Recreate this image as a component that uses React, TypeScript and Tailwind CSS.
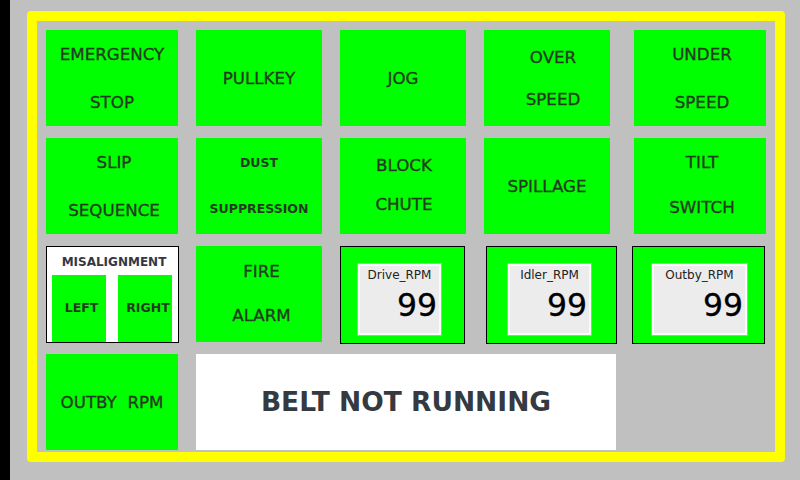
import React from 'react';

const font = { fontFamily: '"DejaVu Sans", Verdana, sans-serif' };

interface TileProps {
  lines: string[];
  spacing?: number;
  size?: string;
  className?: string;
}

// green push-button tile, lines spread vertically by `spacing` gap
const Tile: React.FC<TileProps> = ({
  lines,
  spacing = 28,
  size = 'text-[16.7px] [-webkit-text-stroke:0.35px_#233b23]',
  className = '',
}) => (
  <div
    className={`w-[126px] h-[96px] bg-[#00ff00] flex flex-col items-center justify-center text-[#233b23] ${size} ${className}`}
    style={{ ...font, rowGap: lines.length > 1 ? spacing : 0 }}
  >
    {lines.map((l) => (
      <span key={l} className="leading-[20px] whitespace-pre">
        {l}
      </span>
    ))}
  </div>
);

interface RpmProps {
  label: string;
  className: string;
  panel: string;
}

const RpmBox: React.FC<RpmProps> = ({ label, className, panel }) => (
  <div className={`h-[98px] bg-[#00ff00] border border-black pt-[17px] ${className}`}>
    <div
      className={`h-[71px] bg-[#ececec] border-2 border-[#fafafa] shadow-[0_0_0_1px_#b4b4b4] flex flex-col ${panel}`}
      style={font}
    >
      <span className="text-[12px] text-[#222] text-center leading-[14px] mt-[2px]">{label}</span>
      <span className="text-[31.5px] text-black text-right leading-[36px] pr-[2px] mt-[5px] [-webkit-text-stroke:0.3px_#000]">
        99
      </span>
    </div>
  </div>
);

export default function App() {
  return (
    <div className="w-[800px] h-[480px] bg-[#c0c0c0] flex">
      <div className="w-[10px] h-full bg-black" />
      <div className="ml-[17px] mt-[11px] w-[758px] h-[451px] border-[10px] border-[#ffff00] rounded-[4px] pt-[9px] pl-[9px]">
        <div className="grid grid-cols-[150px_144px_144px_150px_132px] grid-rows-[96px_96px_96px_96px] gap-y-[12px]">
          {/* row 1 */}
          <Tile lines={['EMERGENCY', 'STOP']} className="w-[132px]" />
          <Tile lines={['PULLKEY']} />
          <Tile lines={['JOG']} />
          <Tile lines={['OVER', 'SPEED']} spacing={22} className="pl-[12px]" />
          <Tile lines={['UNDER', 'SPEED']} className="w-[132px] pl-[4px]" />

          {/* row 2 */}
          <Tile lines={['SLIP', 'SEQUENCE']} className="w-[132px] pl-[4px]" />
          <Tile lines={['DUST', 'SUPPRESSION']} spacing={26} size="text-[12.5px] font-bold" />
          <Tile lines={['BLOCK', 'CHUTE']} spacing={19} className="pl-[2px] pb-[4px]" />
          <Tile lines={['SPILLAGE']} />
          <Tile lines={['TILT', 'SWITCH']} spacing={25} className="w-[132px] pl-[4px] pb-[4px]" />

          {/* row 3 */}
          <div className="w-[133px] h-[97px] bg-white border border-black flex flex-col" style={font}>
            <div className="h-[28px] flex items-center justify-center pl-[3px] pt-[1px] text-[12px] font-bold text-[#333844]">
              MISALIGNMENT
            </div>
            <div className="flex-1 flex gap-[12px] pl-[5px] text-[12.5px] font-bold text-[#233b23]">
              <div className="w-[54px] bg-[#00ff00] flex items-center justify-center pl-[5px]">LEFT</div>
              <div className="w-[54px] bg-[#00ff00] flex items-center justify-center pl-[6px]">RIGHT</div>
            </div>
          </div>
          <Tile lines={['FIRE', 'ALARM']} spacing={24} className="pl-[5px] pb-[2px]" />
          <RpmBox label="Drive_RPM" className="w-[125px] pl-[17px]" panel="w-[83px]" />
          <RpmBox label="Idler_RPM" className="w-[131px] ml-[2px] pl-[21px]" panel="w-[83px]" />
          <RpmBox label="Outby_RPM" className="w-[133px] -ml-[2px] pl-[19px]" panel="w-[95px]" />

          {/* row 4 */}
          <Tile lines={['OUTBY  RPM']} className="w-[132px]" />
          <div className="col-span-3 w-[420px] bg-white flex items-center justify-center">
            <span className="text-[26.5px] font-bold text-[#343a40]" style={font}>
              BELT NOT RUNNING
            </span>
          </div>
        </div>
      </div>
    </div>
  );
}
